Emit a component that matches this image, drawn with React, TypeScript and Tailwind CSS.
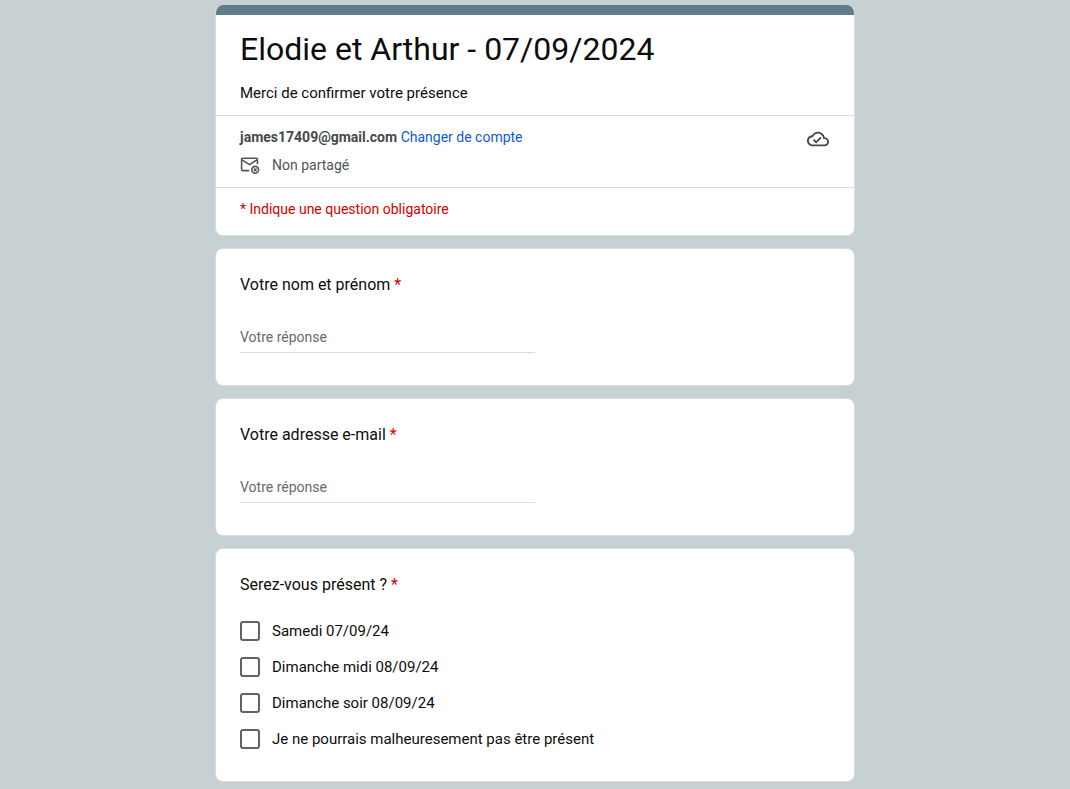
import { useState } from 'react';
import type { ReactNode } from 'react';

const textQuestions = [
  { id: 'nom', label: 'Votre nom et prénom', type: 'text' },
  { id: 'email', label: 'Votre adresse e-mail', type: 'email' },
];

const dates = [
  'Samedi 07/09/24',
  'Dimanche midi 08/09/24',
  'Dimanche soir 08/09/24',
  'Je ne pourrais malheuresement pas être présent',
];

function CloudDoneIcon() {
  return (
    <svg viewBox="0 0 24 24" className="size-6 p-px" fill="currentColor" aria-hidden="true">
      <path d="M19.35 10.04C18.67 6.59 15.64 4 12 4 9.11 4 6.6 5.64 5.35 8.04 2.34 8.36 0 10.91 0 14c0 3.31 2.69 6 6 6h13c2.76 0 5-2.24 5-5 0-2.64-2.05-4.78-4.65-4.96zM19 18H6c-2.21 0-4-1.79-4-4 0-2.05 1.53-3.76 3.56-3.97l1.07-.11.5-.95C8.08 7.14 9.94 6 12 6c2.62 0 4.88 1.86 5.39 4.43l.3 1.5 1.53.11c1.56.1 2.78 1.41 2.78 2.96 0 1.65-1.35 3-3 3zm-9-3.82-2.09-2.09L6.5 13.5 10 17l6.01-6.01-1.41-1.41z" />
    </svg>
  );
}

function MailOffIcon() {
  return (
    <svg viewBox="0 0 20 20" className="size-5" fill="none" stroke="currentColor" aria-hidden="true">
      <path d="M9.2 15.6H2.6a1 1 0 0 1-1-1V4.2a1 1 0 0 1 1-1h13.8a1 1 0 0 1 1 1v5" strokeWidth="1.6" />
      <path d="M2 4.8l7.5 4.8 7.5-4.8" strokeWidth="1.6" />
      <circle cx="15.2" cy="14.8" r="3.4" strokeWidth="1.6" />
      <path d="M13.8 13.4l2.8 2.8m0-2.8l-2.8 2.8" strokeWidth="1.3" />
    </svg>
  );
}

function Card({ children }: { children: ReactNode }) {
  return <div className="rounded-lg border border-[#dadce0] bg-white p-6">{children}</div>;
}

function Required() {
  return <span className="text-[#d90000]"> *</span>;
}

export default function App() {
  const [answers, setAnswers] = useState<Record<string, string>>({});
  const [selected, setSelected] = useState<string[]>([]);

  const toggle = (date: string) => {
    setSelected((prev) => (prev.includes(date) ? prev.filter((d) => d !== date) : [...prev, date]));
  };

  return (
    <div className="min-h-screen bg-[#c7d1d4] px-4 pt-[5px] pb-2 font-[Roboto,sans-serif] text-[#0d0d0d]">
      <form className="mx-auto flex max-w-[640px] flex-col gap-3">
        <header className="overflow-hidden rounded-lg border-x border-b border-[#dadce0] bg-white">
          <div className="h-[10px] bg-[#607d8b]" />
          <div className="px-6 pt-[14px] pb-3">
            <h1 className="text-[32px] leading-10">Elodie et Arthur - 07/09/2024</h1>
            <p className="mt-[14px] text-[15px] leading-5">Merci de confirmer votre présence</p>
          </div>
          <div className="flex items-start justify-between border-y border-[#dadce0] px-6 pt-[11px] pb-3 text-sm leading-5 text-[#50555a]">
            <div>
              <div>
                <strong className="font-bold text-[#45494e]">james17409@gmail.com</strong>{' '}
                <a href="#compte" className="text-[#0b5cd6]">Changer de compte</a>
              </div>
              <div className="mt-2 flex items-center gap-3">
                <MailOffIcon />
                <span>Non partagé</span>
              </div>
            </div>
            <span className="text-[#45494e]">
              <CloudDoneIcon />
            </span>
          </div>
          <p className="px-6 pt-[11px] pb-4 text-sm leading-5 text-[#d00000]">* Indique une question obligatoire</p>
        </header>

        {textQuestions.map((q) => (
          <Card key={q.id}>
            <label htmlFor={q.id} className="block text-base leading-6">
              {q.label}
              <Required />
            </label>
            <div className="mt-7 mb-2">
              <input
                id={q.id}
                type={q.type}
                required
                placeholder="Votre réponse"
                value={answers[q.id] ?? ''}
                onChange={(e) => setAnswers({ ...answers, [q.id]: e.target.value })}
                className="block h-7 w-1/2 border-b border-[#dadce0] pb-1 text-sm leading-5 outline-none placeholder:text-[#666a6f]"
              />
            </div>
          </Card>
        ))}

        <Card>
          <fieldset>
            <legend className="text-base leading-6">
              Serez-vous présent ?
              <Required />
            </legend>
            <div className="mt-6 mb-2 flex flex-col gap-4">
              {dates.map((date) => (
                <label key={date} className="flex items-center gap-3 text-[15px] leading-5">
                  <input
                    type="checkbox"
                    checked={selected.includes(date)}
                    onChange={() => toggle(date)}
                    className="size-5 appearance-none rounded-[3px] border-2 border-[#5f6368] checked:border-[#607d8b] checked:bg-[#607d8b]"
                  />
                  {date}
                </label>
              ))}
            </div>
          </fieldset>
        </Card>
      </form>
    </div>
  );
}
